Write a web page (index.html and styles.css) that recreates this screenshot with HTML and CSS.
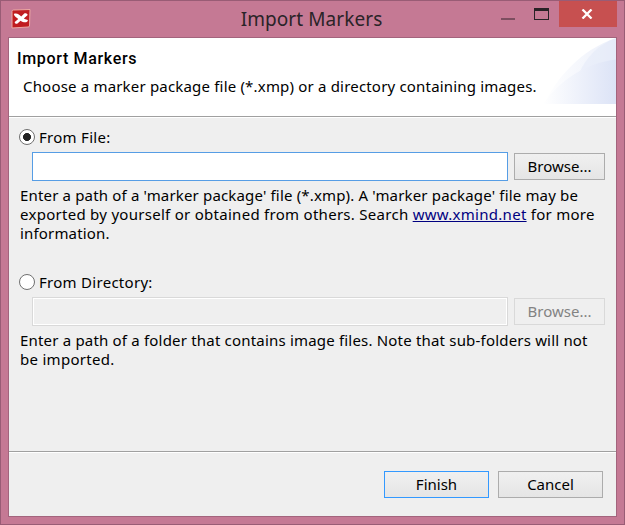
FILE: index.html
```html
<!DOCTYPE html>
<html lang="en">
<head>
<meta charset="utf-8">
<title>Import Markers</title>
<link rel="stylesheet" href="styles.css">
</head>
<body>
<div class="window">
  <div class="titlebar">
    <svg class="app-icon" width="20" height="20" viewBox="0 0 20 20">
      <path d="M1 2.5Q1 1 2.5 1L19 0.5L18.5 17Q18.5 18 17 18L1 19Z" fill="#c01c20" stroke="#eba9a5" stroke-width="1"/>
      <path d="M2.800 5C6 3.700 8.500 6 10.2 7.400L13 4.800C14.200 3.800 16.200 4.500 16.700 6L12.800 9.400C14 10.400 16.200 10.300 16.900 11.300C16.500 13.900 12.700 13.900 9.600 11.800L6.500 14.500C5.200 15.200 3.600 14.400 3.700 12.900L7.300 9.900C5.800 8.700 3.300 7.500 2.800 5Z" fill="#fff"/>
    </svg>
    <h1 class="caption">Import Markers</h1>
    <div class="controls">
      <div class="minimize"></div>
      <div class="maximize"></div>
      <div class="close">
        <svg width="12" height="10" viewBox="0 0 12 10"><path d="M1.500 .5L10.500 9.500M10.500 .5L1.500 9.500" stroke="#fff" stroke-width="2.300"/></svg>
      </div>
    </div>
  </div>
  <main class="dialog">
    <header class="banner">
      <div class="banner-text">
        <h2 class="heading">Import Markers</h2>
        <p class="intro">Choose a marker package file (*.xmp) or a directory containing images.</p>
      </div>
      <svg class="banner-art" width="74" height="66" viewBox="0 0 74 66">
        <defs>
          <linearGradient id="outer"><stop offset="0" stop-color="#fff"/><stop offset="1" stop-color="#ebeffa"/></linearGradient>
          <linearGradient id="inner"><stop offset="0" stop-color="#fff"/><stop offset="1" stop-color="#dce3f6"/></linearGradient>
        </defs>
        <path d="M2 66C14 41 38 12 74 0V66Z" fill="url(#outer)"/>
        <path d="M37 36C43 20 57 6 74 0V38Z" fill="#dfe6f7" opacity=".4"/>
        <path d="M1 66C18 42 44 25 74 21.500V66Z" fill="url(#inner)"/>
      </svg>
    </header>
    <section class="content">
      <div class="option">
        <span class="radio checked"></span><span class="label">From File:</span>
      </div>
      <div class="field-row">
        <div class="input focused"></div>
        <div class="button browse">Browse...</div>
      </div>
      <p class="hint">
        <span class="line">Enter a path of a 'marker package' file (*.xmp). A 'marker package' file may be</span>
        <span class="line loose">exported by yourself or obtained from others. Search <a class="link">www.xmind.net</a> for more</span>
        <span class="line">information.</span>
      </p>
      <div class="option directory">
        <span class="radio"></span><span class="label">From Directory:</span>
      </div>
      <div class="field-row">
        <div class="input disabled"></div>
        <div class="button browse disabled">Browse...</div>
      </div>
      <p class="hint">
        <span class="line medium">Enter a path of a folder that contains image files. Note that sub-folders will not</span>
        <span class="line loose">be imported.</span>
      </p>
    </section>
    <footer class="actions">
      <div class="button primary">Finish</div>
      <div class="button">Cancel</div>
    </footer>
  </main>
</div>
</body>
</html>
```
FILE: styles.css
```css
* { box-sizing: border-box; }
body {
  margin: 0;
  font: 15px/19px "Noto Sans", sans-serif;
  color: #000;
}
h1, h2, p { margin: 0; font-weight: 400; }
.window {
  width: 625px;
  height: 525px;
  padding: 0 7px 7px;
  border: 1px solid #995c75;
  background: #c57994;
}
.titlebar {
  display: grid;
  grid-template-columns: 199px 1fr 201px;
  height: 36px;
  align-items: start;
}
.app-icon { margin: 8px 0 0 3px; }
.caption {
  padding-top: 4px;
  text-align: center;
  font-size: 19px;
  line-height: 28px;
  letter-spacing: .08px;
  color: #2a2428;
  white-space: nowrap;
}
.controls {
  display: flex;
  justify-content: flex-end;
}
.minimize { width: 14px; height: 2px; margin: 17px 19px 0 0; background: #7d4e60; }
.maximize { width: 15px; height: 12px; margin: 7px 10px 0 0; border: 1px solid #292226; border-top-width: 3px; }
.close {
  display: flex;
  justify-content: center;
  align-items: center;
  width: 58px;
  height: 26px;
  padding-right: 2px;
  background: #c75050;
}
.dialog {
  display: flex;
  flex-direction: column;
  width: 609px;
  height: 480px;
  border: 1px solid #a3647d;
  background: #efefef;
}
.banner {
  display: flex;
  justify-content: space-between;
  height: 79px;
  border-bottom: 1px solid #a0a0a0;
  background: #fff;
}
.banner-text { padding: 11px 0 0 8px; width: 533px; }
.heading { font: 500 16px/19px Roboto, sans-serif; letter-spacing: .67px; }
.intro { margin: 9px 0 0 6px; letter-spacing: .185px; white-space: nowrap; }
.banner-art { flex: none; }
.content {
  height: 335px;
  padding: 11px 11px 0;
  border-top: 1px solid #fff;
  border-bottom: 1px solid #a0a0a0;
}
.option { display: flex; align-items: flex-start; height: 17px; }
.directory { margin-top: 31px; }
.radio {
  width: 16px;
  height: 16px;
  margin-left: -1px;
  border: 1px solid #707070;
  border-radius: 50%;
  background: #fff;
}
.checked { background: radial-gradient(circle, #222 3.700px, #fff 4.300px); }
.label { margin: -1px 0 0 4px; letter-spacing: .28px; white-space: nowrap; }
.field-row {
  display: flex;
  align-items: center;
  gap: 6px;
  height: 29px;
  margin: 6px 0 5px 12px;
}
.input { width: 476px; height: 29px; border: 1px solid #569de5; background: #fff; }
.input.disabled { border-color: #d9d9d9; background: #efefef; box-shadow: inset 0 0 0 1px #fff; }
.button {
  width: 105px;
  height: 27px;
  border: 1px solid #acacac;
  background: linear-gradient(#f0f0f0, #e5e5e5);
  text-align: center;
  line-height: 25px;
}
.browse { width: 91px; }
.button.disabled { border-color: #d9d9d9; background: #efefef; color: #838383; }
.primary { border-color: #3399ff; }
.line { display: block; letter-spacing: .165px; white-space: nowrap; }
.line.medium { letter-spacing: .19px; }
.line.loose { letter-spacing: .28px; }
.link { color: #000080; text-decoration: underline; }
.actions {
  display: flex;
  justify-content: flex-end;
  gap: 9px;
  flex: 1;
  padding: 18px 13px 0 0;
  border-top: 1px solid #fff;
}
```
